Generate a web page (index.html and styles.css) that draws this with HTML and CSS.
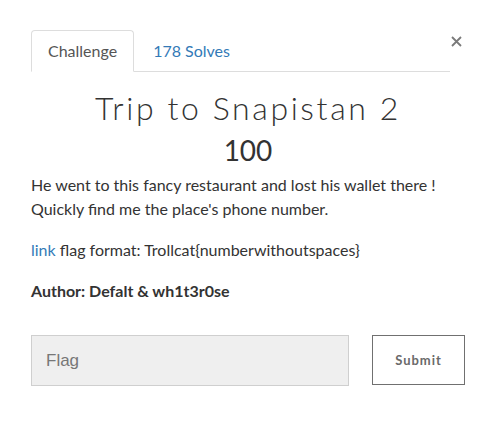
FILE: index.html
```html
<!DOCTYPE html>
<html>
<head>
<meta charset="utf-8">
<link rel="stylesheet" href="styles.css">
</head>
<body>
<div class="modal">
  <button class="close" aria-label="Close">
    <svg width="11" height="11" viewBox="0 0 11 11"><path d="M1 1L10 10M10 1L1 10" stroke="#7a7a7a" stroke-width="1.8" fill="none"/></svg>
  </button>
  <ul class="tabs">
    <li class="tab active">Challenge</li>
    <li class="tab"><a href="#">178 Solves</a></li>
  </ul>
  <h2 class="title">Trip to Snapistan 2</h2>
  <h3 class="value">100</h3>
  <div class="desc">
    <p>He went to this fancy restaurant and lost his wallet there !<br>Quickly find me the place's phone number.</p>
    <p><a href="#">link</a> flag format: Trollcat{numberwithoutspaces}</p>
    <p class="author">Author: Defalt &amp; wh1t3r0se</p>
  </div>
  <form class="submit-row">
    <input class="flag" type="text" placeholder="Flag">
    <button class="submit" type="button">Submit</button>
  </form>
</div>
</body>
</html>
```
FILE: styles.css
```css
html, body {
  margin: 0;
  padding: 0;
  background: #fff;
}
body {
  font-family: Lato, "Open Sans", sans-serif;
  color: #333;
}
.modal {
  position: relative;
  width: 434px;
  padding: 30px 0 0 31px;
}
.close {
  position: absolute;
  top: 36px;
  left: 451px;
  border: 0;
  background: none;
  padding: 0;
  line-height: 0;
}
.tabs {
  list-style: none;
  width: 419px;
  margin: 0;
  padding: 0;
  display: flex;
  border-bottom: 1px solid #ddd;
}
.tab {
  margin-right: 2px;
  margin-bottom: -1px;
  padding: 10px 16px;
  border: 1px solid transparent;
  border-radius: 4px 4px 0 0;
  font-size: 16px;
  line-height: 20px;
  color: #555;
}
.tab.active {
  border-color: #ddd;
  border-bottom-color: #fff;
  background: #fff;
}
.tab a {
  color: #337ab7;
  text-decoration: none;
}
.title {
  margin: 16px 0 0;
  text-align: center;
  font-weight: 300;
  font-size: 32px;
  line-height: 40px;
  letter-spacing: 2.6px;
  color: #333;
}
.value {
  margin: 6px 0 0;
  text-align: center;
  font-weight: 400;
  font-size: 28px;
  line-height: 32px;
  color: #333;
}
.desc {
  margin-top: 7px;
  font-size: 16px;
  line-height: 24px;
}
.desc p {
  margin: 0 0 17px;
}
.desc a {
  color: #337ab7;
  text-decoration: none;
}
.author {
  font-weight: 700;
}
.submit-row {
  display: flex;
  gap: 23px;
  margin-top: 32px;
}
.flag {
  box-sizing: border-box;
  flex: none;
  width: 318px;
  height: 51px;
  padding: 0 14px;
  border: 1px solid #cfcfcf;
  background: #efefef;
  font-family: "Liberation Sans", Arial, sans-serif;
  font-size: 17px;
  color: #555;
  outline: none;
}
.flag::placeholder {
  color: #777;
}
.submit {
  box-sizing: border-box;
  flex: none;
  width: 93px;
  height: 50px;
  border: 1px solid #707070;
  background: #fff;
  font-family: Lato, sans-serif;
  font-weight: 700;
  font-size: 13px;
  letter-spacing: 1px;
  color: #6a6a6a;
}
```
